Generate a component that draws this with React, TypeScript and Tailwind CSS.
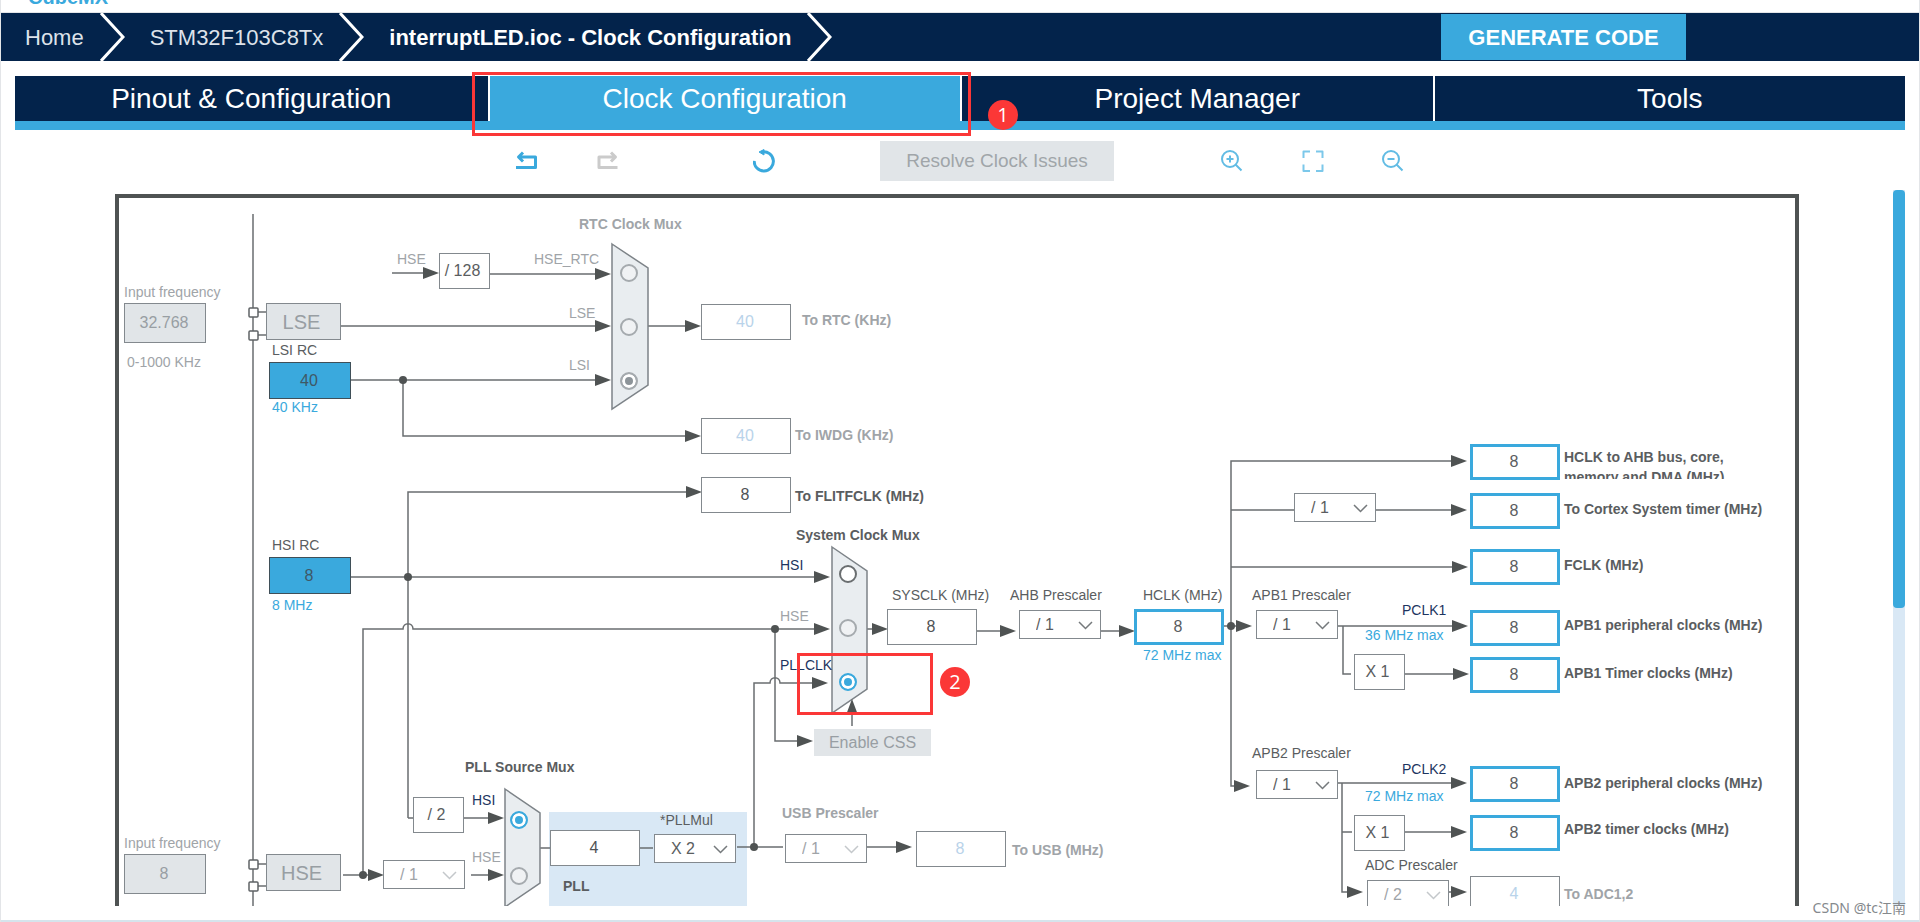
import type { ReactNode } from 'react';

const BLUE = '#3aa9dd';

type Tone = 'dark' | 'muted' | 'navy' | 'blue';

const TONES: Record<Tone, string> = {
  dark: 'text-[#5a5d60]',
  muted: 'text-[#a0a4a8]',
  navy: 'text-[#1d3560]',
  blue: 'text-[#3aa9dd]',
};

// [text, left, top, tone, bold, id of the control it names]
const LABELS: Array<[string, number, number, Tone, boolean, string?]> = [
  ['Input frequency', 25, 94, 'muted', false, 'lse-in'],
  ['0-1000 KHz', 28, 164, 'muted', false],
  ['LSI RC', 173, 152, 'dark', false, 'lsi'],
  ['40 KHz', 173, 209, 'blue', false],
  ['HSE', 298, 61, 'muted', false],
  ['HSE_RTC', 435, 61, 'muted', false, 'rtc-hse'],
  ['LSE', 470, 115, 'muted', false, 'rtc-lse'],
  ['LSI', 470, 167, 'muted', false, 'rtc-lsi'],
  ['RTC Clock Mux', 480, 26, 'muted', true],
  ['To RTC (KHz)', 703, 122, 'muted', true, 'rtc'],
  ['To IWDG (KHz)', 696, 237, 'muted', true, 'iwdg'],
  ['To FLITFCLK (MHz)', 696, 298, 'dark', true, 'flitf'],
  ['HSI RC', 173, 347, 'dark', false, 'hsi'],
  ['8 MHz', 173, 407, 'blue', false],
  ['System Clock Mux', 697, 337, 'dark', true],
  ['HSI', 681, 367, 'navy', false, 'sys-hsi'],
  ['HSE', 681, 418, 'muted', false, 'sys-hse'],
  ['PLLCLK', 681, 467, 'navy', false, 'sys-pll'],
  ['PLL Source Mux', 366, 569, 'dark', true],
  ['HSI', 373, 602, 'navy', false, 'pll-hsi'],
  ['HSE', 373, 659, 'muted', false, 'pll-hse'],
  ['Input frequency', 25, 645, 'muted', false, 'hse-in'],
  ['*PLLMul', 561, 622, 'dark', false, 'pllmul'],
  ['PLL', 464, 688, 'dark', true, 'pll'],
  ['USB Prescaler', 683, 615, 'muted', true, 'usb-div'],
  ['To USB (MHz)', 913, 652, 'muted', true, 'usb'],
  ['SYSCLK (MHz)', 793, 397, 'dark', false, 'sysclk'],
  ['AHB Prescaler', 911, 397, 'dark', false, 'ahb-div'],
  ['HCLK (MHz)', 1044, 397, 'dark', false, 'hclk'],
  ['72 MHz max', 1044, 457, 'blue', false],
  ['APB1 Prescaler', 1153, 397, 'dark', false, 'apb1-div'],
  ['PCLK1', 1303, 412, 'navy', false],
  ['36 MHz max', 1266, 437, 'blue', false],
  ['APB2 Prescaler', 1153, 555, 'dark', false, 'apb2-div'],
  ['PCLK2', 1303, 571, 'navy', false],
  ['72 MHz max', 1266, 598, 'blue', false],
  ['ADC Prescaler', 1266, 667, 'dark', false, 'adc-div'],
  ['To Cortex System timer (MHz)', 1465, 311, 'dark', true, 'cortex'],
  ['FCLK (MHz)', 1465, 367, 'dark', true, 'fclk'],
  ['APB1 peripheral clocks (MHz)', 1465, 427, 'dark', true, 'apb1'],
  ['APB1 Timer clocks (MHz)', 1465, 475, 'dark', true, 'apb1-tim'],
  ['APB2 peripheral clocks (MHz)', 1465, 585, 'dark', true, 'apb2'],
  ['APB2 timer clocks (MHz)', 1465, 631, 'dark', true, 'apb2-tim'],
  ['To ADC1,2', 1465, 696, 'muted', true, 'adc'],
];

type Kind = 'plain' | 'faded' | 'live' | 'source' | 'input';

const KINDS: Record<Kind, string> = {
  plain: 'h-9 w-[90px] border border-[#83898e] bg-white text-[#4f5355]',
  faded: 'h-9 w-[90px] border border-[#83898e] bg-white text-[#b9d3ea]',
  live: 'h-9 w-[90px] border-3 border-[#3aa9dd] bg-white text-[#5a5d60]',
  source: 'h-[37px] w-[82px] border border-[#3f4f58] bg-[#3aa9dd] text-[#3f5866]',
  input: 'h-10 w-[82px] border border-[#83898e] bg-[#e1e5e8] text-[#989ea3]',
};

const VALUES: Array<[string, string, number, number, Kind]> = [
  ['lse-in', '32.768', 25, 113, 'input'],
  ['lsi', '40', 170, 172, 'source'],
  ['rtc', '40', 602, 114, 'faded'],
  ['iwdg', '40', 602, 228, 'faded'],
  ['flitf', '8', 602, 287, 'plain'],
  ['hsi', '8', 170, 367, 'source'],
  ['hse-in', '8', 25, 664, 'input'],
  ['pll', '4', 451, 640, 'plain'],
  ['usb', '8', 817, 641, 'faded'],
  ['sysclk', '8', 788, 419, 'plain'],
  ['hclk', '8', 1035, 419, 'live'],
  ['cortex', '8', 1371, 303, 'live'],
  ['hclk-ahb', '8', 1371, 254, 'live'],
  ['fclk', '8', 1371, 359, 'live'],
  ['apb1', '8', 1371, 420, 'live'],
  ['apb1-tim', '8', 1371, 467, 'live'],
  ['apb2', '8', 1371, 576, 'live'],
  ['apb2-tim', '8', 1371, 625, 'live'],
  ['adc', '4', 1371, 686, 'faded'],
];

const SELECTS: Array<[string, string, number, number, boolean]> = [
  ['hse-div', '/ 1', 284, 670, true],
  ['pllmul', 'X 2', 555, 644, false],
  ['usb-div', '/ 1', 686, 644, true],
  ['ahb-div', '/ 1', 920, 420, false],
  ['cortex-div', '/ 1', 1195, 303, false],
  ['apb1-div', '/ 1', 1157, 420, false],
  ['apb2-div', '/ 1', 1157, 580, false],
  ['adc-div', '/ 2', 1268, 690, true],
];

const FIXED: Array<[string, number, number]> = [
  ['/ 128', 340, 63],
  ['/ 2', 314, 607],
  ['X 1', 1255, 464],
  ['X 1', 1255, 625],
];

const RADIOS: Array<[string, string, number, number, boolean, boolean]> = [
  ['rtc', 'rtc-hse', 521, 74, false, true],
  ['rtc', 'rtc-lse', 521, 128, false, true],
  ['rtc', 'rtc-lsi', 521, 182, true, true],
  ['sys', 'sys-hsi', 740, 375, false, false],
  ['sys', 'sys-hse', 740, 429, false, true],
  ['sys', 'sys-pll', 740, 483, true, false],
  ['pll', 'pll-hsi', 411, 621, true, false],
  ['pll', 'pll-hse', 411, 677, false, true],
];

const WIRES = [
  'M154 24V716',
  'M159 122H167 M159 145H167 M159 674H167 M159 696H167',
  'M293 83H330 M390 84H500 M242 136H500 M252 190H500 M304 190V246H590',
  'M549 136H590',
  'M252 387H720 M309 628V302H592 M309 628H314',
  'M264 685V439H304C304 432 314 432 314 439H720 M244 685H275',
  'M365 628H392 M372 685H392 M441 658H451 M540 658H554 M638 657H684',
  'M655 657V493H671C671 486 681 486 681 493H716 M676 439V551H702',
  'M753 536V520 M768 439H778 M768 657H800',
  'M878 441H905 M1002 441H1024 M1125 436H1142',
  'M1356 271H1132V596H1142 M1132 320H1195 M1277 320H1356 M1132 377H1358',
  'M1239 436H1358 M1244 436V484H1252 M1305 484H1358',
  'M1239 593H1358 M1243 593V702H1252 M1243 642H1253 M1305 642H1358 M1350 702H1356',
];

// Tips of the arrow heads
const TIPS = [
  [340, 83], [512, 84], [512, 136], [512, 190], [602, 136], [602, 246], [603, 302],
  [731, 387], [731, 439], [729, 493], [714, 551], [405, 628], [405, 685], [285, 685],
  [789, 439], [813, 657], [917, 441], [1036, 441], [1153, 436], [1151, 596],
  [1368, 271], [1368, 320], [1369, 377], [1369, 436], [1370, 484], [1368, 593],
  [1368, 642], [1264, 702], [1368, 702],
];

const DOTS = [[304, 190], [309, 387], [264, 685], [676, 439], [655, 657], [1132, 436]];
const PINS = [117, 140, 669, 691];

function Wiring() {
  return (
    <svg className="pointer-events-none absolute top-0 left-0" width="1700" height="716" aria-hidden="true">
      <path d={WIRES.join(' ')} fill="none" stroke="#6a6e70" strokeWidth="1.5" />
      {TIPS.map(([x, y]) => (
        <path key={`${x}-${y}`} d={`M${x} ${y}l-16 -6v12z`} fill="#4f5353" />
      ))}
      {DOTS.map(([x, y]) => <circle key={`${x}-${y}`} cx={x} cy={y} r="4" fill="#4f5353" />)}
      {PINS.map(y => (
        <rect key={y} x="150" y={y + 1} width="9" height="9" rx="1" fill="#fff" stroke="#5f6366" strokeWidth="1.5" />
      ))}
      <g fill="#e9edf0" stroke="#7d8388" strokeWidth="1.5">
        <path d="M513 54L549 78V195L513 219z" />
        <path d="M733 357L768 381V499L733 523z" />
        <path d="M406 599L441 623V693L406 717z" />
      </g>
      <path d="M753 509l-6 16h12z" fill="#4f5353" />
    </svg>
  );
}

function ClockSelect({ id, text, x, y, disabled }: {
  id: string; text: string; x: number; y: number; disabled: boolean;
}) {
  return (
    <div className="absolute h-[29px] w-[82px]" style={{ left: x, top: y }}>
      <select id={id} aria-label={id} disabled={disabled} defaultValue={text}
        className="h-full w-full appearance-none border border-[#83898e] bg-white pl-4 text-base leading-5 text-[#5a5d60] opacity-100 disabled:text-[#a0a4a8]">
        <option value={text}>{text}</option>
      </select>
      <svg className="pointer-events-none absolute top-[11px] right-2" width="15" height="9" viewBox="0 0 15 9"
        fill="none" stroke={disabled ? '#c4c8cb' : '#75797c'} strokeWidth="1.5" aria-hidden="true">
        <path d="M1 1L7.500 7.500L14 1" />
      </svg>
    </div>
  );
}

function Oscillator({ name, y }: { name: string; y: number }) {
  return (
    <div style={{ left: 167, top: y }}
      className="absolute flex h-[37px] w-[75px] items-center justify-center border border-[#83898e] bg-[#e1e5e8] pr-1 text-xl text-[#989ea3]">
      {name}
    </div>
  );
}

function Marker({ children }: { children: ReactNode }) {
  return (
    <span className="flex size-[30px] items-center justify-center rounded-full bg-[#fb3737] font-['Open_Sans',sans-serif] text-xl leading-none text-white">
      {children}
    </span>
  );
}

function ClockTree() {
  return (
    <div className="relative min-w-0 flex-1 overflow-hidden pt-1 pr-[94px] pl-4">
      <div className="h-full border-4 border-b-0 border-[#4f5353]" />
      <div style={{ left: 450, top: 622 }} className="absolute h-24 w-[198px] bg-[#d9e8f5]" />
      <Wiring />
      <Oscillator name="LSE" y={113} />
      <Oscillator name="HSE" y={664} />
      {FIXED.map(([text, x, y]) => (
        <div key={`${x}-${y}`} style={{ left: x, top: y }}
          className="absolute flex h-9 w-[51px] items-center justify-center border border-[#83898e] bg-white pr-1 text-base whitespace-nowrap text-[#5a5d60]">
          {text}
        </div>
      ))}
      {VALUES.map(([id, value, x, y, kind]) => (
        <input key={id} id={id} aria-label={id} readOnly defaultValue={value} style={{ left: x, top: y }}
          className={`absolute pr-[2px] text-center text-base ${KINDS[kind]}`} />
      ))}
      {SELECTS.map(([id, text, x, y, disabled]) => (
        <ClockSelect key={id} id={id} text={text} x={x} y={y} disabled={disabled} />
      ))}
      {RADIOS.map(([group, id, x, y, checked, disabled]) => (
        <input key={id} id={id} type="radio" name={group} defaultChecked={checked} disabled={disabled}
          style={{ left: x, top: y }}
          className="absolute size-[18px] appearance-none rounded-full border-2 border-[#6a6e70] bg-white checked:border-[#3aa9dd] checked:bg-[#3aa9dd] checked:shadow-[inset_0_0_0_3px_white] disabled:border-[#a5aaae] disabled:bg-[#f0f2f4] disabled:checked:bg-[#8d9499]" />
      ))}
      <button disabled style={{ left: 715, top: 539 }}
        className="absolute h-[27px] w-[117px] bg-[#e1e5e8] text-base leading-5 text-[#989ea3]">
        Enable CSS
      </button>
      {LABELS.map(([text, x, y, tone, bold, id]) => (
        <label key={`${x}-${y}`} htmlFor={id} style={{ left: x, top: y }}
          className={`absolute text-sm leading-4 whitespace-nowrap ${TONES[tone]} ${bold ? 'font-bold' : ''}`}>
          {text}
        </label>
      ))}
      <label htmlFor="hclk-ahb" style={{ left: 1465, top: 257 }}
        className="absolute h-8 w-[200px] overflow-hidden text-sm leading-5 font-bold text-[#5a5d60]">
        HCLK to AHB bus, core, memory and DMA (MHz)
      </label>
      <div style={{ left: 698, top: 463 }} className="absolute flex h-[62px] w-[136px] items-center border-3 border-[#fb3737] pb-1">
        <span className="absolute left-[140px]"><Marker>2</Marker></span>
      </div>
    </div>
  );
}

function Crumb({ children, current }: { children: ReactNode; current?: boolean }) {
  return (
    <li className="flex h-full items-center">
      <a href="#" className={`pr-4 pl-[25px] ${current ? 'font-bold text-white' : 'text-[#dde2ea]'}`}>{children}</a>
      <svg width="25" height="48" viewBox="0 0 25 48" fill="none" stroke="#fff" strokeWidth="3" aria-hidden="true">
        <path d="M1 0L23 24L1 48" />
      </svg>
    </li>
  );
}

const TABS = ['Pinout & Configuration', 'Clock Configuration', 'Project Manager', 'Tools'];

function Tabs() {
  return (
    <nav className="mx-[15px] mt-[15px] flex border-b-9 border-[#3aa9dd]">
      {TABS.map((tab, i) => (
        <div key={tab} className="relative flex-1">
          <button className={`h-[45px] w-full text-[28px] leading-9 text-white ${i ? 'border-l-2 border-white' : ''} ${i === 1 ? 'bg-[#3aa9dd]' : 'bg-[#03234b]'}`}>
            {tab}
          </button>
          {i === 1 && (
            <>
              <div className="pointer-events-none absolute -top-1 -right-[11px] -left-4 z-10 h-16 border-3 border-[#fb3737]" />
              <span className="absolute top-6 -right-[58px] z-10"><Marker>1</Marker></span>
            </>
          )}
        </div>
      ))}
    </nav>
  );
}

function Tool({ name, color = BLUE, width = 2, className = '', children }: {
  name: string; color?: string; width?: number; className?: string; children: ReactNode;
}) {
  return (
    <button aria-label={name} className={className}>
      <svg width="22" height="24" viewBox="0 0 22 24" fill="none" stroke={color} strokeWidth={width} strokeLinejoin="round">
        {children}
      </svg>
    </button>
  );
}

function Toolbar() {
  return (
    <div className="flex h-[60px] items-center justify-center pt-[2px]">
      <Tool name="Undo" width={3}>
        <path d="M2 8H19.500V18.500H0M7 3.500L2.500 8L7 12.500" />
      </Tool>
      <Tool name="Redo" width={3} color="#cbcbcb" className="ml-[59px]">
        <path d="M18 8H2V18.500H20.500M14 3.500L18.500 8L14 12.500" />
      </Tool>
      <Tool name="Reset" width={3} className="ml-[134px]">
        <path d="M1.200 11.800A9.600 9.600 0 1 0 9 2.900" />
        <path d="M6 3L11 0.500V6z" fill={BLUE} strokeWidth="1" />
      </Tool>
      <button disabled className="ml-[105px] h-10 w-[234px] bg-[#e1e5e8] text-[19px] text-[#a0a5a9]">
        Resolve Clock Issues
      </button>
      <Tool name="Zoom in" color="#62bce4" className="ml-[107px]">
        <circle cx="9" cy="10" r="8" />
        <path d="M14.500 15.500L20.500 21.500M9 6.500V13.500M5.500 10H12.500" />
      </Tool>
      <Tool name="Fit to screen" color="#7cc8ea" className="ml-[59px]">
        <path d="M1.500 9V2.500H8M14 2.500H20.500V9M20.500 15.500V22H14M8 22H1.500V15.500" />
      </Tool>
      <Tool name="Zoom out" color="#62bce4" className="ml-[58px]">
        <circle cx="9" cy="10" r="8" />
        <path d="M14.500 15.500L20.500 21.500M5.500 10H12.500" />
      </Tool>
    </div>
  );
}

export default function App() {
  return (
    <div className="relative flex h-screen flex-col overflow-hidden bg-white font-['Liberation_Sans',Arial,sans-serif]">
      <div className="flex h-[13px] shrink-0 items-end overflow-hidden border-b border-[#e3e5e8] pb-[5px] pl-7 text-xl leading-5 font-bold text-[#3aa9dd]">
        CubeMX
      </div>
      <header className="flex h-12 shrink-0 items-center bg-[#03234b] text-[22px]">
        <ol className="flex h-full flex-1 items-center">
          <Crumb>Home</Crumb>
          <Crumb>STM32F103C8Tx</Crumb>
          <Crumb current>interruptLED.ioc - Clock Configuration</Crumb>
        </ol>
        <button className="mr-[234px] h-[46px] w-[245px] bg-[#3aa9dd] font-bold text-white">GENERATE CODE</button>
      </header>
      <Tabs />
      <Toolbar />
      <main className="mb-4 flex min-h-0 flex-1 pr-[15px] pl-[99px]">
        <ClockTree />
        <div className="w-3 bg-[#d9e8f5]">
          <div className="h-[418px] rounded-sm bg-[#3aa9dd]" />
        </div>
      </main>
      <div className="absolute inset-x-0 bottom-0 h-[2px] bg-[#d6e4ec]" />
      <div className="pointer-events-none absolute inset-0 border-x border-[#e3e5e8]" />
      <div className="absolute right-[14px] bottom-[2px] font-['Noto_Sans','Noto_Sans_CJK_SC',sans-serif] text-sm leading-6 text-[#85898d]">
        CSDN @tc江南
      </div>
    </div>
  );
}
